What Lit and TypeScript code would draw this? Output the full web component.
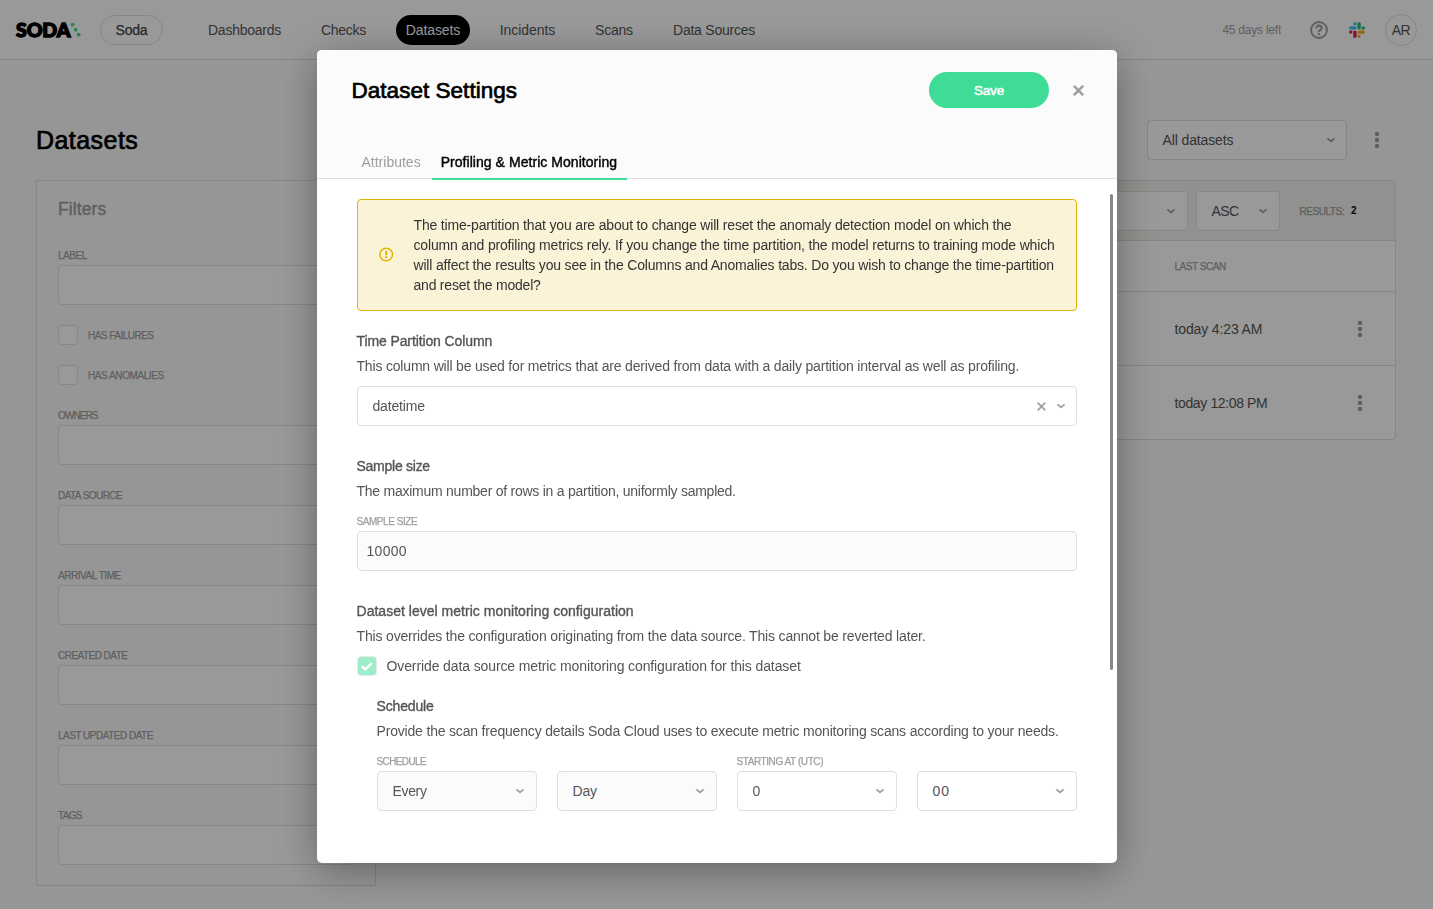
import { LitElement, html, css, svg, nothing } from "lit";
import { customElement } from "lit/decorators.js";
import { classMap } from "lit/directives/class-map.js";
import { styleMap } from "lit/directives/style-map.js";

type Tracked = [text: string, tracking: number];

const NAV: [string, number, boolean?][] = [
  ["Dashboards", -0.25],
  ["Checks", -0.27],
  ["Datasets", -0.1, true],
  ["Incidents", -0.07],
  ["Scans", -0.22],
  ["Data Sources", -0.24],
];

const FILTERS_BOTTOM: Tracked[] = [
  ["OWNERS", -0.9],
  ["DATA SOURCE", -0.55],
  ["ARRIVAL TIME", -0.45],
  ["CREATED DATE", -0.53],
  ["LAST UPDATED DATE", -0.5],
  ["TAGS", -0.7],
];

const CHECKS: Tracked[] = [
  ["HAS FAILURES", -0.52],
  ["HAS ANOMALIES", -0.42],
];

const SCANS: Tracked[] = [
  ["today 4:23 AM", -0.13],
  ["today 12:08 PM", -0.37],
];

const t = (text: string, tracking: number) =>
  html`<span style=${styleMap({ letterSpacing: `${tracking}px` })}>${text}</span>`;

const chevron = html`<svg class="chevron" width="10" height="8" viewBox="0 0 10 8">
  <path d="M1.4 2.4 5 5.4 8.6 2.4" fill="none" stroke="currentColor" stroke-width="1.8" />
</svg>`;

const cross = (size: number, width: number) => html`<svg width=${size} height=${size} viewBox="0 0 10 10">
  <path d="M.8.8 9.2 9.2M9.2.8.8 9.2" fill="none" stroke="currentColor" stroke-width=${width} />
</svg>`;

const dots = html`<svg class="dots" width="6" height="18" viewBox="0 0 6 18">
  ${[3, 9, 15].map((y) => svg`<circle cx="3" cy=${y} r="2.2" fill="currentColor" />`)}
</svg>`;

const slack = html`<svg class="slack" width="16" height="16" viewBox="0 0 24 24">
  <path fill="#e01e5a" d="M5.042 15.165a2.528 2.528 0 0 1-2.52 2.523A2.528 2.528 0 0 1 0 15.165a2.527 2.527 0 0 1 2.522-2.52h2.52v2.52zM6.313 15.165a2.527 2.527 0 0 1 2.521-2.52 2.527 2.527 0 0 1 2.521 2.52v6.313A2.528 2.528 0 0 1 8.834 24a2.528 2.528 0 0 1-2.521-2.522v-6.313z" />
  <path fill="#36c5f0" d="M8.834 5.042a2.528 2.528 0 0 1-2.521-2.52A2.528 2.528 0 0 1 8.834 0a2.528 2.528 0 0 1 2.521 2.522v2.52H8.834zM8.834 6.313a2.528 2.528 0 0 1 2.521 2.521 2.528 2.528 0 0 1-2.521 2.521H2.522A2.528 2.528 0 0 1 0 8.834a2.528 2.528 0 0 1 2.522-2.521h6.312z" />
  <path fill="#2eb67d" d="M18.956 8.834a2.528 2.528 0 0 1 2.522-2.521A2.528 2.528 0 0 1 24 8.834a2.528 2.528 0 0 1-2.522 2.521h-2.522V8.834zM17.688 8.834a2.528 2.528 0 0 1-2.523 2.521 2.527 2.527 0 0 1-2.52-2.521V2.522A2.527 2.527 0 0 1 15.165 0a2.528 2.528 0 0 1 2.523 2.522v6.312z" />
  <path fill="#ecb22e" d="M15.165 18.956a2.528 2.528 0 0 1 2.523 2.522A2.528 2.528 0 0 1 15.165 24a2.527 2.527 0 0 1-2.52-2.522v-2.522h2.52zM15.165 17.688a2.527 2.527 0 0 1-2.52-2.523 2.526 2.526 0 0 1 2.52-2.52h6.313A2.527 2.527 0 0 1 24 15.165a2.528 2.528 0 0 1-2.522 2.523h-6.313z" />
</svg>`;

const help = html`<svg width="22" height="22" viewBox="0 0 24 24">
  <g fill="none" stroke="#9e9e9e">
    <circle cx="12" cy="12" r="8.7" stroke-width="2.1" />
    <path d="M9 10.1c0-1.8 1.3-2.9 3-2.9s3 1.1 3 2.7c0 2-3 2.1-3 4.2" stroke-width="2.3" />
    <path d="M12 15.4v2.3" stroke-width="2.5" />
  </g>
</svg>`;

const shared = css`
  :host {
    font: 14px/20px "Liberation Sans", Arial, sans-serif;
    color: #555;
  }
  * {
    box-sizing: border-box;
  }
  svg {
    display: block;
    flex: none;
  }
  .select {
    display: flex;
    align-items: center;
    height: 40px;
    padding: 0 10px 0 14.5px;
    border: 1px solid #dfdfdc;
    border-radius: 4px;
    background: #fff;
    white-space: nowrap;
  }
  .select .chevron {
    margin-left: auto;
    color: #9e9e9e;
  }
  .label {
    display: block;
    height: 10px;
    font-size: 10px;
    line-height: 11px;
    color: #9e9e9e;
    white-space: nowrap;
    -webkit-text-stroke: 0.25px currentColor;
  }
`;

@customElement("datasets-page")
export class DatasetsPage extends LitElement {
  static styles = [
    shared,
    css`
      :host {
        display: block;
        height: 909px;
        overflow: hidden;
        background: #fbfbfb;
      }
      .topbar {
        display: flex;
        align-items: center;
        height: 60px;
        padding: 0 16px;
        border-bottom: 1px solid #dfdfdc;
        background: #fff;
      }
      .logo {
        display: flex;
        width: 84px;
        color: #000;
      }
      .word {
        width: 54.5px;
        font: 900 19.5px/24px Lato, sans-serif;
        letter-spacing: -0.1px;
        -webkit-text-stroke: 1.4px #000;
      }
      .org {
        display: flex;
        align-items: center;
        justify-content: center;
        width: 63px;
        height: 30px;
        border: 1px solid #dfdfdc;
        border-radius: 15px;
        color: #444;
        -webkit-text-stroke: 0.25px currentColor;
      }
      nav {
        display: grid;
        grid-template-columns: 93px 65px 74px 75px 58px 102px;
        gap: 20px;
        margin-left: 35px;
      }
      .link {
        height: 30px;
        border-radius: 15px;
        line-height: 30px;
        text-align: center;
        white-space: nowrap;
      }
      .link.active {
        background: #000;
        color: #fff;
      }
      .right {
        display: flex;
        align-items: center;
        margin-left: auto;
      }
      .trial {
        margin-right: 27px;
        font-size: 12px;
        color: #9e9e9e;
      }
      .slack {
        margin: 0 20px 0 19px;
      }
      .avatar {
        width: 32px;
        height: 32px;
        border: 1px solid #dfdfdc;
        border-radius: 50%;
        line-height: 30px;
        text-align: center;
      }
      .heading {
        display: flex;
        align-items: center;
        height: 40px;
        margin: 60px 53px 0 36px;
      }
      h1 {
        margin: 0 auto 0 0;
        font-size: 25px;
        font-weight: 400;
        color: #000;
        -webkit-text-stroke: 0.7px #000;
      }
      .dots {
        color: #9e9e9e;
      }
      .view {
        width: 200px;
        margin-right: 27px;
      }
      .columns {
        display: grid;
        grid-template-columns: 340px 1000px;
        align-items: start;
        gap: 20px;
        padding: 20px 0 0 36px;
      }
      .filters {
        height: 706px;
        padding: 18px 21px 0;
        border: 1px solid #dfdfdc;
      }
      h2 {
        margin: 0 0 31px;
        font-size: 17.5px;
        line-height: 20px;
        font-weight: 400;
        color: #9e9e9e;
        -webkit-text-stroke: 0.4px currentColor;
      }
      .filters .label {
        margin-bottom: 5px;
      }
      .input {
        height: 40px;
        margin-bottom: 25px;
        border: 1px solid #dfdfdc;
        border-radius: 4px;
        background: #fff;
      }
      .input.first {
        margin-bottom: 20px;
      }
      .check {
        display: flex;
        align-items: center;
        gap: 10px;
        margin-bottom: 20px;
      }
      .check + .field {
        margin-top: 25px;
      }
      .check .label {
        margin: 0;
      }
      .box {
        width: 20px;
        height: 20px;
        border: 1px solid #dfdfdc;
        border-radius: 4px;
        background: #fff;
      }
      .table {
        border: 1px solid #dfdfdc;
        border-radius: 4px;
        background: #fff;
        overflow: hidden;
      }
      .tools {
        display: flex;
        align-items: center;
        justify-content: flex-end;
        height: 60px;
        padding-right: 32px;
        border-bottom: 1px solid #dfdfdc;
        background: #f2f2ee;
      }
      .sort {
        width: 260px;
        margin-right: 8px;
        padding-right: 11px;
      }
      .order {
        width: 84px;
        margin-right: 19.5px;
        padding-right: 11px;
      }
      .count {
        width: 12px;
        margin-left: 7px;
        font-size: 10px;
        font-weight: 700;
        color: #000;
      }
      .row {
        display: flex;
        align-items: center;
        height: 74px;
        padding: 0 32px 0 777.5px;
        border-bottom: 1px solid #dfdfdc;
      }
      .row:last-child {
        height: 73px;
        border: 0;
      }
      .row.head {
        height: 51px;
      }
      .row .dots {
        margin-left: auto;
      }
    `,
  ];

  render() {
    return html`
      <div class="topbar">
        <div class="logo">
          <span class="word">SODA</span>
          <svg width="10" height="24" viewBox="0 0 10 24">
            <g fill="#3edc97">
              <circle cx="1.6" cy="6.6" r="1.9" />
              <circle cx="4.6" cy="11.7" r="1.9" />
              <circle cx="7.7" cy="16.7" r="1.9" />
            </g>
          </svg>
        </div>
        <div class="org">${t("Soda", -0.2)}</div>
        <nav>
          ${NAV.map(([text, tracking, active]) => html`<div class=${classMap({ link: true, active: !!active })}>${t(text, tracking)}</div>`)}
        </nav>
        <div class="right">
          <span class="trial">${t("45 days left", -0.23)}</span>
          ${help}${slack}
          <div class="avatar">${t("AR", -0.5)}</div>
        </div>
      </div>
      <div class="heading">
        <h1>${t("Datasets", 0.45)}</h1>
        <div class="select view">${t("All datasets", -0.12)}${chevron}</div>
        ${dots}
      </div>
      <div class="columns">
        <div class="filters">
          <h2>${t("Filters", 0.1)}</h2>
          <div class="label">${t("LABEL", -0.45)}</div>
          <div class="input first"></div>
          ${CHECKS.map(([text, tracking]) => html`<div class="check"><span class="box"></span><span class="label">${t(text, tracking)}</span></div>`)}
          ${FILTERS_BOTTOM.map(([text, tracking]) => html`<div class="field"><span class="label">${t(text, tracking)}</span><div class="input"></div></div>`)}
        </div>
        <div class="table">
          <div class="tools">
            <div class="select sort">${chevron}</div>
            <div class="select order">${t("ASC", -0.6)}${chevron}</div>
            <span class="label">${t("RESULTS:", -0.45)}</span>
            <span class="count">2</span>
          </div>
          <div class="row head"><span class="label">${t("LAST SCAN", -0.45)}</span></div>
          ${SCANS.map(([text, tracking]) => html`<div class="row">${t(text, tracking)}${dots}</div>`)}
        </div>
      </div>
    `;
  }
}

@customElement("dataset-settings")
export class DatasetSettings extends LitElement {
  static styles = [
    shared,
    css`
      :host {
        display: block;
        width: 800px;
        height: 813px;
        border-radius: 5px;
        background: #fff;
        box-shadow: 0 8px 40px rgba(0, 0, 0, 0.35);
        letter-spacing: -0.17px;
      }
      header {
        height: 129px;
        border-bottom: 1px solid #dfdfdc;
        border-radius: 5px 5px 0 0;
        background: #fbfbfb;
      }
      .bar {
        display: flex;
        align-items: center;
        height: 80px;
        padding: 0 33px 0 34.5px;
      }
      h1 {
        margin: 2px auto 0 0;
        font-size: 22.5px;
        font-weight: 400;
        color: #000;
        -webkit-text-stroke: 0.7px #000;
      }
      .save {
        width: 120px;
        height: 36px;
        margin-right: 24px;
        border-radius: 18px;
        background: #3edc97;
        color: #fff;
        font-size: 13.5px;
        line-height: 37px;
        text-align: center;
        -webkit-text-stroke: 0.5px #fff;
      }
      .close {
        color: #9e9e9e;
      }
      .tabs {
        display: flex;
        padding: 15px 0 0 34px;
      }
      .tab {
        height: 35px;
        padding: 7px 0 0 10.5px;
        color: #9e9e9e;
      }
      .tab.on {
        width: 195px;
        margin-left: 11px;
        padding-left: 9px;
        border-bottom: 2px solid #3edc97;
        color: #000;
        white-space: nowrap;
        -webkit-text-stroke: 0.4px #000;
      }
      .scroll {
        display: grid;
        grid-template-columns: 720px 3px;
        column-gap: 33px;
        align-items: start;
        padding: 20px 0 0 40px;
      }
      .thumb {
        height: 476px;
        margin-top: -5px;
        border-radius: 2px;
        background: #888;
      }
      .warning {
        display: flex;
        align-items: center;
        height: 112px;
        padding-left: 21px;
        border: 1px solid #e0b400;
        border-radius: 4px;
        background: #faf3d8;
        color: #333;
      }
      .warning p {
        margin: 0 0 0 19.5px;
        white-space: nowrap;
      }
      .warning svg {
        margin-top: -1px;
      }
      section {
        margin-top: 30px;
      }
      .warning + section {
        margin-top: 20px;
      }
      h3 {
        margin: 0 0 0 -0.5px;
        font-size: 14px;
        font-weight: 400;
        -webkit-text-stroke: 0.35px currentColor;
      }
      .text {
        margin: 5px 0 0 -0.5px;
        white-space: nowrap;
      }
      .column {
        margin-top: 10px;
      }
      .column .chevron {
        margin-left: 10.5px;
      }
      .clear {
        margin-left: auto;
        color: #9e9e9e;
      }
      .label {
        margin: 0 0 5px -0.5px;
      }
      .sample {
        margin-top: 15px;
      }
      .input {
        height: 40px;
        padding-left: 8.5px;
        border: 1px solid #dfdfdc;
        border-radius: 4px;
        background: #fbfbfb;
        line-height: 39px;
      }
      .override {
        display: flex;
        align-items: center;
        gap: 9.5px;
        margin-top: 10px;
      }
      .nested {
        margin: 20px 0 0 20px;
      }
      .schedule {
        display: grid;
        grid-template-columns: repeat(4, 160px);
        gap: 20px;
        align-items: end;
        margin-top: 15px;
      }
      .locked {
        background: #fbfbfb;
      }
      .schedule .select {
        padding-right: 11px;
      }
    `,
  ];

  private picker(label: Tracked | null, value: Tracked, locked: boolean) {
    return html`<div>
      ${label ? html`<span class="label">${t(...label)}</span>` : nothing}
      <div class=${classMap({ select: true, locked })}>${t(...value)}${chevron}</div>
    </div>`;
  }

  render() {
    return html`
      <header>
        <div class="bar">
          <h1>${t("Dataset Settings", 0.03)}</h1>
          <div class="save">${t("Save", -0.2)}</div>
          <span class="close">${cross(11, 2.3)}</span>
        </div>
        <div class="tabs">
          <div class="tab">${t("Attributes", 0)}</div>
          <div class="tab on">${t("Profiling & Metric Monitoring", 0.05)}</div>
        </div>
      </header>
      <div class="scroll">
        <div>
          <div class="warning">
            <svg width="15" height="15" viewBox="0 0 15 15">
              <circle cx="7.2" cy="7.5" r="6.3" fill="none" stroke="#e0b400" stroke-width="1.5" />
              <path d="M7.2 4v4.2M7.2 9.3v1.8" stroke="#e0b400" stroke-width="2" />
            </svg>
            <p>
              The time-partition that you are about to change will reset the anomaly detection model on which the<br />
              column and profiling metrics rely. If you change the time partition, the model returns to training mode which<br />
              ${t("will affect the results you see in the Columns and Anomalies tabs. Do you wish to change the time-partition", -0.18)}<br />
              ${t("and reset the model?", -0.22)}
            </p>
          </div>
          <section>
            <h3>${t("Time Partition Column", -0.11)}</h3>
            <p class="text">${t("This column will be used for metrics that are derived from data with a daily partition interval as well as profiling.", -0.182)}</p>
            <div class="select column">${t("datetime", -0.17)}<span class="clear">${cross(9, 1.9)}</span>${chevron}</div>
          </section>
          <section>
            <h3>${t("Sample size", -0.26)}</h3>
            <p class="text">${t("The maximum number of rows in a partition, uniformly sampled.", -0.25)}</p>
            <div class="sample">
              <span class="label">${t("SAMPLE SIZE", -0.45)}</span>
              <div class="input">${t("10000", 0.3)}</div>
            </div>
          </section>
          <section>
            <h3>${t("Dataset level metric monitoring configuration", 0.02)}</h3>
            <p class="text">${t("This overrides the configuration originating from the data source. This cannot be reverted later.", -0.165)}</p>
            <div class="override">
              <svg width="20" height="20" viewBox="0 0 20 20">
                <rect x=".5" y=".5" width="19" height="19" rx="3.5" fill="#9eedca" stroke="#e3ece6" />
                <path d="M5 10.2 8.4 13.4 14.8 7.2" fill="none" stroke="#fff" stroke-width="2.3" />
              </svg>
              ${t("Override data source metric monitoring configuration for this dataset", -0.11)}
            </div>
            <div class="nested">
              <h3>${t("Schedule", -0.15)}</h3>
              <p class="text">${t("Provide the scan frequency details Soda Cloud uses to execute metric monitoring scans according to your needs.", -0.18)}</p>
              <div class="schedule">
                ${this.picker(["SCHEDULE", -0.62], ["Every", -0.35], true)}
                ${this.picker(null, ["Day", -0.2], true)}
                ${this.picker(["STARTING AT (UTC)", -0.42], ["0", 0], false)}
                ${this.picker(null, ["00", 1], false)}
              </div>
            </div>
          </section>
        </div>
        <div class="thumb"></div>
      </div>
    `;
  }
}

@customElement("app-root")
export class AppRoot extends LitElement {
  static styles = css`
    :host {
      display: block;
      height: 909px;
    }
    .scrim {
      position: fixed;
      inset: 0;
      display: flex;
      justify-content: center;
      align-items: flex-start;
      padding: 50px 0 0 1px;
      background: rgba(0, 0, 0, 0.4);
    }
  `;

  render() {
    return html`
      <datasets-page></datasets-page>
      <div class="scrim"><dataset-settings></dataset-settings></div>
    `;
  }
}
